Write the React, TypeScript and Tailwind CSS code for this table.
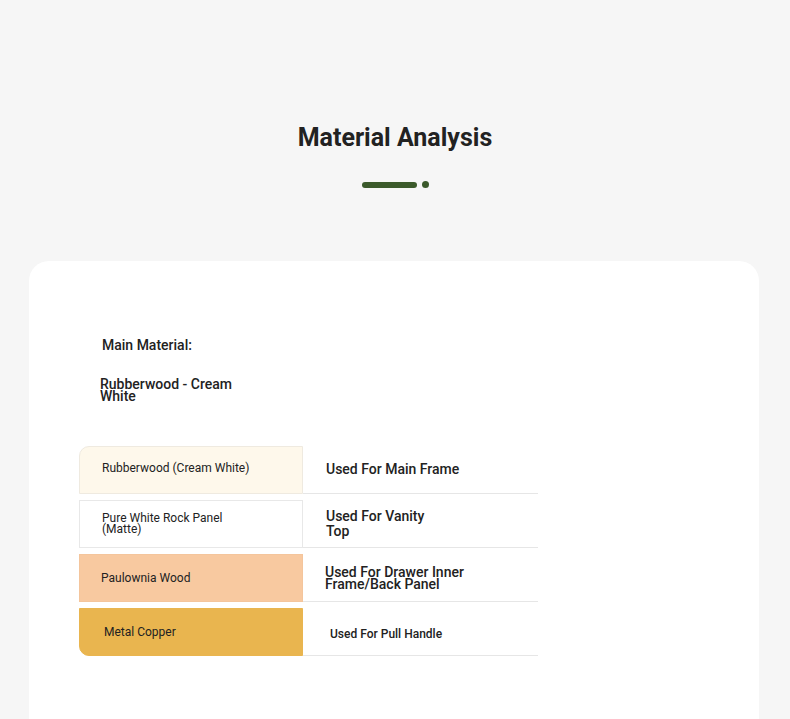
import React from "react";

const rows = [
  {
    left: "Rubberwood (Cream White)",
    right: "Used For Main Frame",
    leftCls: "bg-[#fef8eb] border border-[#efeae0] rounded-tl-[10px] pl-[22px] pb-[4px]",
    rightCls: "text-[14px] font-medium leading-[15px] pl-[23px] max-w-[180px]",
  },
  {
    left: "Pure White Rock Panel (Matte)",
    right: "Used For Vanity Top",
    leftCls: "bg-white border border-[#e8e8e8] pl-[22px]",
    rightCls: "text-[14px] font-medium leading-[15px] pl-[23px] w-[140px]",
  },
  {
    left: "Paulownia Wood",
    right: "Used For Drawer Inner Frame/Back Panel",
    leftCls: "bg-[#f8c9a0] border border-[#f4c59c] pl-[21px]",
    rightCls: "text-[14px] font-medium leading-[12px] pl-[22px] w-[170px]",
  },
  {
    left: "Metal Copper",
    right: "Used For Pull Handle",
    leftCls: "bg-[#e9b54f] border border-[#e9b54f] rounded-bl-[10px] pl-[24px]",
    rightCls: "text-[12px] font-medium leading-[14px] pl-[27px] pt-[4px]",
  },
];

export default function App() {
  return (
    <div
      className="min-h-[719px] bg-[#f6f6f6] text-[#222222] overflow-hidden"
      style={{ fontFamily: "Roboto, 'Noto Sans', Arial, sans-serif" }}
    >
      <div className="pt-[122px] flex flex-col items-center">
        <h1 className="text-[25px] leading-[32px] font-bold text-[#222222]">Material Analysis</h1>
        <div className="mt-[27px] flex items-center gap-[5px]">
          <div className="w-[55px] h-[6px] rounded-full bg-[#3b5a2b]" />
          <div className="w-[7px] h-[7px] rounded-full bg-[#3b5a2b]" />
        </div>
      </div>
      <div className="mt-[73px] ml-[29px] w-[730px] h-[520px] bg-white rounded-[20px] pt-[74px] px-[50px]">
        <div className="ml-[23px] text-[14px] leading-[20px] font-medium">Main Material:</div>
        <div className="ml-[21px] mt-[23px] w-[150px] text-[14px] leading-[12px] font-medium">
          Rubberwood - Cream White
        </div>
        <div className="mt-[44px] flex flex-col gap-[6px]">
          {rows.map((r) => (
            <div key={r.left} className="flex h-[48px]">
              <div className={"w-[224px] h-full flex items-center " + r.leftCls}>
                <span className="w-[155px] text-[12px] leading-[11px] font-normal text-[#222222]">{r.left}</span>
              </div>
              <div className="w-[235px] h-full flex items-center border-b border-[#e6e6e6]">
                <span className={r.rightCls}>{r.right}</span>
              </div>
            </div>
          ))}
        </div>
      </div>
    </div>
  );
}
